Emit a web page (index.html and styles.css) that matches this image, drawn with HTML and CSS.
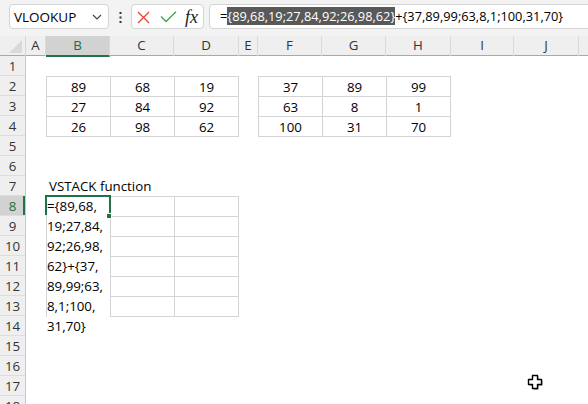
FILE: index.html
```html
<!DOCTYPE html>
<html>
<head>
<meta charset="utf-8">
<link rel="stylesheet" href="styles.css">
</head>
<body>
<div class="app">
  <div class="toolbar">
    <div class="namebox">
      <span class="name">VLOOKUP</span>
      <svg class="chev" width="10" height="6" viewBox="0 0 10 6"><path d="M1 1 L5 5 L9 1" fill="none" stroke="#444" stroke-width="1.2"/></svg>
    </div>
    <div class="dots">
      <svg width="3" height="11" viewBox="0 0 3 11"><rect x="0.5" y="0" width="2" height="2" fill="#333"/><rect x="0.5" y="4.5" width="2" height="2" fill="#333"/><rect x="0.5" y="9" width="2" height="2" fill="#333"/></svg>
    </div>
    <div class="btns">
      <svg class="icon-x" width="13" height="13" viewBox="0 0 13 13"><path d="M1 1 L12 12 M12 1 L1 12" stroke="#e0453a" stroke-width="1.3" fill="none"/></svg>
      <svg class="icon-ok" width="17" height="12" viewBox="0 0 17 12"><path d="M1 5.5 L6 10.5 L16 0.8" stroke="#3aa451" stroke-width="1.3" fill="none"/></svg>
      <span class="fx">fx</span>
    </div>
    <div class="formula"><span class="eq">=</span><span class="hl">{89,68,19;27,84,92;26,98,62}</span><span>+{37,89,99;63,8,1;100,31,70}</span></div>
  </div>

  <div class="colheads">
    <div class="corner"><span class="tri"></span></div>
    <div class="ch">A</div>
    <div class="ch sel">B</div>
    <div class="ch">C</div>
    <div class="ch">D</div>
    <div class="ch">E</div>
    <div class="ch">F</div>
    <div class="ch">G</div>
    <div class="ch">H</div>
    <div class="ch">I</div>
    <div class="ch">J</div>
    <div class="ch last"></div>
  </div>

  <div class="main">
    <div class="rowheads">
      <div class="rh">1</div>
      <div class="rh">2</div>
      <div class="rh">3</div>
      <div class="rh">4</div>
      <div class="rh">5</div>
      <div class="rh">6</div>
      <div class="rh">7</div>
      <div class="rh sel">8</div>
      <div class="rh">9</div>
      <div class="rh">10</div>
      <div class="rh">11</div>
      <div class="rh">12</div>
      <div class="rh">13</div>
      <div class="rh">14</div>
      <div class="rh">15</div>
      <div class="rh">16</div>
      <div class="rh">17</div>
      <div class="rh">18</div>
    </div>

    <div class="sheet">
      <div class="tbl t1">
        <div>89</div><div>68</div><div>19</div>
        <div>27</div><div>84</div><div>92</div>
        <div>26</div><div>98</div><div>62</div>
      </div>
      <div class="tbl t2">
        <div>37</div><div>89</div><div>99</div>
        <div>63</div><div>8</div><div>1</div>
        <div>100</div><div>31</div><div>70</div>
      </div>
      <div class="label">VSTACK function</div>
      <div class="tbl t3">
        <div></div><div></div><div></div>
        <div></div><div></div><div></div>
        <div></div><div></div><div></div>
        <div></div><div></div><div></div>
        <div></div><div></div><div></div>
        <div></div><div></div><div></div>
      </div>
      <div class="editbox">
        <div>={89,68,</div>
        <div>19;27,84,</div>
        <div>92;26,98,</div>
        <div>62}+{37,</div>
        <div>89,99;63,</div>
        <div>8,1;100,</div>
        <div>31,70}</div>
      </div>
      <div class="active"><span class="handle"></span></div>
    </div>
  </div>

  <svg class="cursor" width="18" height="18" viewBox="0 0 18 18">
    <path d="M6.5 2.5 H11.5 V6.5 H15.5 V11.5 H11.5 V15.5 H6.5 V11.5 H2.5 V6.5 H6.5 Z" fill="#777" transform="translate(1 1)"/>
    <path d="M6.5 2.5 H11.5 V6.5 H15.5 V11.5 H11.5 V15.5 H6.5 V11.5 H2.5 V6.5 H6.5 Z" fill="#fff" stroke="#000" stroke-width="1.4" stroke-linejoin="round"/>
  </svg>
</div>
</body>
</html>
```

FILE: styles.css
```css
* { box-sizing: border-box; }
html, body { margin: 0; padding: 0; background: #fff; }
body {
  font-family: "Open Sans", "Noto Sans", "Liberation Sans", sans-serif;
  font-size: 13.3px;
  color: #000;
  overflow: hidden;
}
.app { position: relative; width: 588px; height: 404px; overflow: hidden; }

/* toolbar */
.toolbar {
  height: 36px;
  background: #f3f3f3;
  display: flex;
  align-items: flex-start;
  padding: 4px 0 0 9px;
}
.namebox {
  width: 100px;
  height: 25px;
  background: #fff;
  border: 1px solid #d4d4d4;
  border-radius: 4px;
  display: flex;
  align-items: center;
  justify-content: space-between;
  padding: 0 6px 0 4px;
}
.name { font-size: 13.5px; line-height: 20px; color: #000; }
.dots { width: 22px; height: 25px; display: flex; align-items: center; justify-content: center; padding-top: 1px; }
.btns {
  width: 73px;
  height: 25px;
  background: #fff;
  border: 1px solid #d4d4d4;
  border-radius: 4px;
  display: flex;
  align-items: center;
  padding-left: 5px;
}
.icon-x { margin-top: 1px; }
.icon-ok { margin-left: 10px; margin-top: 1px; }
.fx {
  font-family: "Liberation Serif", "DejaVu Serif", serif;
  font-style: italic;
  font-size: 18px;
  line-height: 20px;
  margin-left: 8px;
  color: #222;
}
.formula {
  flex: 1;
  margin-left: 5px;
  margin-right: -10px;
  height: 25px;
  background: #fff;
  border: 1px solid #d4d4d4;
  border-radius: 4px;
  padding: 2px 0 0 10px;
  font-size: 12.8px;
  line-height: 19px;
  white-space: nowrap;
}
.hl { background: #595959; color: #fff; }

/* column headers */
.colheads {
  display: grid;
  grid-template-columns: 26px 20px 64px 64px 65px 19px 64px 64px 65px 63px 65px 1fr;
  height: 20px;
  background: #efefef;
  border-bottom: 1px solid #a8a8a8;
}
.corner { position: relative; border-right: 1px solid #d6d6d6; }
.tri {
  position: absolute;
  right: 3px;
  bottom: 3px;
  width: 0; height: 0;
  border-left: 13px solid transparent;
  border-bottom: 13px solid #d9d9d9;
}
.ch {
  text-align: center;
  font-size: 13.3px;
  line-height: 19px;
  color: #333;
  border-right: 1px solid #dadada;
}
.ch.sel {
  background: #d2d2d2;
  color: #1e6e42;
  border-bottom: 2px solid #217346;
  margin-bottom: -1px;
}
.ch.last { border-right: none; }

/* body */
.main { display: flex; }
.rowheads { width: 26px; background: #efefef; border-right: 1px solid #c8c8c8; }
.rh {
  height: 20px;
  text-align: center;
  font-size: 13.3px;
  line-height: 20px;
  color: #333;
  border-bottom: 1px solid #dddddd;
}
.rh.sel {
  background: #d2d2d2;
  color: #1e6e42;
  box-shadow: inset -2px 0 0 #217346;
}

.sheet {
  flex: 1;
  display: grid;
  grid-template-columns: 20px 64px 64px 65px 19px 64px 64px 65px 63px 65px 1fr;
  grid-template-rows: repeat(18, 20px);
}
.tbl {
  display: grid;
  grid-template-columns: 64px 64px 64px;
  grid-auto-rows: 20px;
  border-right: 1px solid #d4d4d4;
  border-bottom: 1px solid #d4d4d4;
  align-self: start;
  justify-self: start;
}
.tbl > div {
  border-left: 1px solid #d4d4d4;
  border-top: 1px solid #d4d4d4;
  text-align: center;
  line-height: 19px;
  padding-top: 1px;
}
.t1 { grid-column: 2 / 5; grid-row: 2 / 5; }
.t2 { grid-column: 6 / 9; grid-row: 2 / 5; }
.t3 { grid-column: 2 / 5; grid-row: 8 / 14; z-index: 0; }
.label {
  grid-column: 2 / 5;
  grid-row: 7;
  padding: 1px 0 0 3px;
  line-height: 19px;
  white-space: nowrap;
}
.editbox {
  grid-column: 2;
  grid-row: 8 / span 7;
  margin-left: 1px;
  width: 63px;
  background: #fff;
  z-index: 1;
  white-space: nowrap;
}
.editbox > div { height: 20px; line-height: 19px; padding-top: 1px; }
.active {
  grid-column: 2;
  grid-row: 8;
  margin: -1px -1px 0 -1px;
  height: 20px;
  border: 2px solid #217346;
  border-bottom: none;
  position: relative;
  z-index: 2;
}
.handle {
  position: absolute;
  right: -3px;
  bottom: -4px;
  width: 6px;
  height: 6px;
  background: #217346;
  border: 1px solid #fff;
}

.cursor { position: absolute; left: 526px; top: 373px; }
```
